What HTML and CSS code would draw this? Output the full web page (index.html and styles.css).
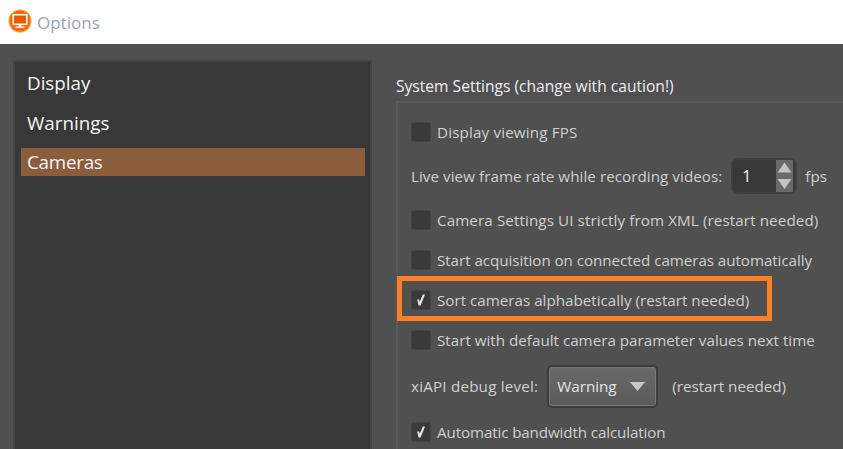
FILE: index.html
```html
<!DOCTYPE html>
<html lang="en">
<head>
<meta charset="utf-8">
<title>Options</title>
<link rel="stylesheet" href="styles.css">
</head>
<body>
<header class="titlebar">
  <svg class="app-icon" width="24" height="24" viewBox="0 0 24 24">
    <circle cx="12" cy="12" r="11.5" fill="#f9a04e"/>
    <circle cx="12" cy="12" r="10.5" fill="#f96a00"/>
    <rect x="4.5" y="5" width="15" height="11" rx="1" fill="#fff"/>
    <rect x="6" y="6.5" width="12" height="8" fill="#e85a00"/>
    <rect x="10.6" y="16" width="2.8" height="1.6" fill="#fff"/>
    <rect x="7.5" y="17.4" width="9" height="1.5" fill="#fff"/>
  </svg>
  <span class="title">Options</span>
</header>
<main class="dialog">
  <nav class="sidebar">
    <div class="nav-item">Display</div>
    <div class="nav-item">Warnings</div>
    <div class="nav-item selected">Cameras</div>
  </nav>
  <section class="settings">
    <h2 class="group-title">System Settings (change with caution!)</h2>
    <div class="group">
      <label class="row track-fps"><span class="check"></span>Display viewing FPS</label>
      <div class="row row-2 track-live">Live view frame rate while recording videos:
        <span class="spin">
          <span class="spin-value">1</span>
          <span class="spin-buttons">
            <svg width="17" height="16" viewBox="0 0 17 16"><path d="M8.5 2.5L15.5 12.5H1.5Z" fill="#c4c4c4"/></svg>
            <svg width="17" height="16" viewBox="0 0 17 16"><path d="M1.5 3H15.5L8.5 13Z" fill="#c4c4c4"/></svg>
          </span>
        </span>
        <span class="unit">fps</span>
      </div>
      <label class="row row-3 track-xml"><span class="check"></span>Camera Settings UI strictly from XML (restart needed)</label>
      <label class="row row-4 track-acq"><span class="check"></span>Start acquisition on connected cameras automatically</label>
      <label class="row row-4 highlighted"><span class="check"><svg width="10" height="12" viewBox="0 0 10 12"><path d="M1.2 5.5H3L3.8 7.8L6.8 0.5H9L4.6 11.5H2.6Z" fill="#e8e8e8"/></svg></span>Sort cameras alphabetically (restart needed)</label>
      <label class="row row-4"><span class="check"></span>Start with default camera parameter values next time</label>
      <div class="row row-7">
        <span class="track-debug">xiAPI debug level:</span>
        <span class="combo">Warning<svg width="15" height="9" viewBox="0 0 15 9"><path d="M0 0H15L7.5 9Z" fill="#c8c8c8"/></svg></span>
        <span class="note">(restart needed)</span>
      </div>
      <label class="row row-8 track-auto"><span class="check"><svg width="10" height="12" viewBox="0 0 10 12"><path d="M1.2 5.5H3L3.8 7.8L6.8 0.5H9L4.6 11.5H2.6Z" fill="#e8e8e8"/></svg></span>Automatic bandwidth calculation</label>
    </div>
  </section>
</main>
</body>
</html>
```
FILE: styles.css
```css
*, *::after { box-sizing: border-box; }
html, body { margin: 0; height: 100%; overflow: hidden; }
body {
  width: 843px;
  height: 449px;
  display: flex;
  flex-direction: column;
  background: #505050;
  font-family: "Open Sans", "Noto Sans", sans-serif;
}
.titlebar {
  height: 44px;
  flex: none;
  background: #fff;
  display: flex;
  align-items: center;
  padding: 0 0 2px 8px;
  gap: 5px;
}
.title { font-size: 17px; color: #98a4b2; position: relative; top: 1px; }
.dialog {
  flex: 1;
  display: flex;
  min-height: 0;
  overflow: hidden;
  padding: 16px 0 0 13px;
}
.sidebar {
  width: 359px;
  flex: none;
  background: #383838;
  border: 2px solid #454545;
  border-bottom: 0;
  padding: 7px 5px 0 6px;
}
.nav-item {
  height: 28px;
  margin-bottom: 11.5px;
  padding-left: 6px;
  font-size: 18.8px;
  line-height: 28px;
  color: #f4f4f4;
}
.nav-item.selected { background: #8a5d3c; letter-spacing: -0.25px; }
.settings { flex: 1; min-width: 0; padding: 0 0 0 24px; }
.group-title {
  margin: 15px 0 0;
  font-size: 15.6px;
  font-weight: 400;
  line-height: 22px;
  color: #eee;
  white-space: nowrap;
}
.group {
  margin-top: 4px;
  height: 348px;
  border: 0 solid #5a5a5a;
  border-width: 2px 0 0 2px;
  padding: 19px 0 0 13px;
  position: relative;
}
.row {
  display: flex;
  align-items: center;
  font-size: 15.2px;
  color: #cfcfcf;
  white-space: nowrap;
  height: 20px;
}
.track-fps { letter-spacing: 0.15px; }
.track-live { letter-spacing: 0.05px; }
.track-xml { letter-spacing: 0.1px; }
.track-acq { letter-spacing: -0.06px; }
.track-debug { letter-spacing: 0.2px; }
.track-auto { letter-spacing: -0.13px; }
.row-2 { margin-top: 21px; height: 26px; }
.row-3 { margin-top: 21px; }
.row-4 { margin-top: 20px; }
.row-7 { margin-top: 13px; height: 46px; }
.row-8 { margin-top: 13px; }
.check {
  width: 20px;
  height: 20px;
  flex: none;
  background: #3a3a3a;
  border: 1px solid #454545;
  border-radius: 2px;
  margin-right: 6px;
  display: flex;
  align-items: center;
  justify-content: center;
}
.spin {
  width: 66px;
  height: 36px;
  margin: 0 8px 0 9px;
  flex: none;
  background: #383838;
  border: 2px solid #414141;
  border-radius: 6px;
  display: flex;
  justify-content: space-between;
  overflow: hidden;
}
.spin-value { padding-left: 9px; line-height: 32px; color: #f2f2f2; font-size: 16px; }
.spin-buttons {
  width: 17px;
  margin-right: 2px;
  background: #6a6a6a;
  display: flex;
  flex-direction: column;
  justify-content: center;
}
.spin-buttons svg { display: block; }
.combo {
  width: 111px;
  height: 43px;
  margin: 0 14px 0 9px;
  flex: none;
  display: flex;
  align-items: center;
  justify-content: space-between;
  padding: 0 11px 0 8px;
  color: #e4e4e4;
  font-size: 15.2px;
  background: linear-gradient(#6a6a6a, #5a5a5a);
  border: 2px solid #3c3c3c;
  border-radius: 5px;
  box-shadow: inset 0 0 0 1px #777;
}
.highlighted::after {
  content: "";
  position: absolute;
  left: -1px;
  top: 173px;
  width: 375px;
  height: 45px;
  border: 5px solid #ff7f27;
}
```
